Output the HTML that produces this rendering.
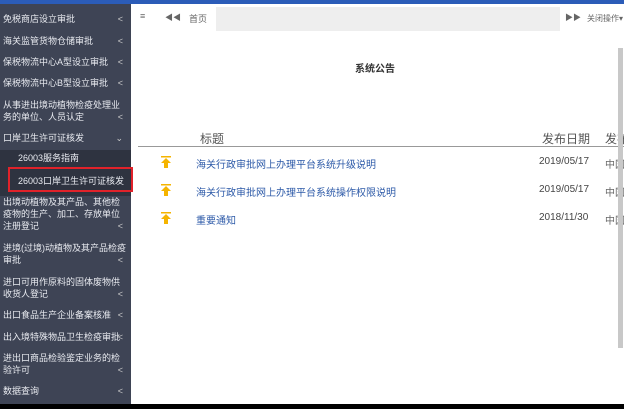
<!DOCTYPE html><html><head><meta charset="utf-8"><style>
*{margin:0;padding:0;box-sizing:border-box}
body{width:624px;height:409px;overflow:hidden;background:#fff;font-family:"Liberation Sans","Noto Sans CJK SC",sans-serif;position:relative;white-space:nowrap}
.top{position:absolute;left:0;top:0;width:624px;height:4px;background:#2b5cb8}
.side{position:absolute;left:0;top:4px;width:131px;height:400px;background:#3e4455;color:#e8eaf0;font-size:9px}
.it{position:absolute;left:3px;width:125px;line-height:12px}
.ar{position:absolute;right:5px;font-size:9px;color:#ccc}
.sub{position:absolute;left:0;top:146px;width:131px;height:46px;background:#2e3340}
.red{position:absolute;left:8px;top:167px;width:125px;height:25px;border:2.5px solid #e0222a}
.bottom{position:absolute;left:0;top:404px;width:624px;height:5px;background:#000}
.main{position:absolute;left:133px;top:4px;width:491px;height:400px;background:#fff;overflow:hidden}
.tabs{position:absolute;left:0;top:0;width:491px;height:26px;font-size:9px;color:#666}
.gray{position:absolute;left:83px;top:3px;width:344px;height:24px;background:#eeeeee}
.sc{position:absolute;left:618px;top:48px;width:5px;height:300px;background:#c8c8c8}
.row{position:absolute;font-size:10px}
.up{position:absolute;left:160px;width:12px;height:12px}
</style></head><body>
<div class="top"></div>
<div class="side">
<div class="sub"></div>
<div class="it" style="top:9px">免税商店设立审批<span class="ar">&lt;</span></div>
<div class="it" style="top:31px">海关监管货物仓储审批<span class="ar">&lt;</span></div>
<div class="it" style="top:52px">保税物流中心A型设立审批<span class="ar">&lt;</span></div>
<div class="it" style="top:73px">保税物流中心B型设立审批<span class="ar">&lt;</span></div>
<div class="it" style="top:95px">从事进出境动植物检疫处理业<br>务的单位、人员认定<span class="ar" style="top:12px">&lt;</span></div>
<div class="it" style="top:128px">口岸卫生许可证核发<span class="ar">⌄</span></div>
<div class="it" style="top:148px;left:18px">26003服务指南</div>
<div class="it" style="top:171px;left:18px">26003口岸卫生许可证核发</div>
<div class="it" style="top:192px">出境动植物及其产品、其他检<br>疫物的生产、加工、存放单位<br>注册登记<span class="ar" style="top:24px">&lt;</span></div>
<div class="it" style="top:238px">进境(过境)动植物及其产品检疫<br>审批<span class="ar" style="top:12px">&lt;</span></div>
<div class="it" style="top:272px">进口可用作原料的固体废物供<br>收货人登记<span class="ar" style="top:12px">&lt;</span></div>
<div class="it" style="top:305px">出口食品生产企业备案核准<span class="ar">&lt;</span></div>
<div class="it" style="top:327px">出入境特殊物品卫生检疫审批<span class="ar">&lt;</span></div>
<div class="it" style="top:348px">进出口商品检验鉴定业务的检<br>验许可<span class="ar" style="top:12px">&lt;</span></div>
<div class="it" style="top:381px">数据查询<span class="ar">&lt;</span></div>
</div>
<div class="red"></div>
<div class="main">
<div class="tabs"><div class="gray"></div>
<span style="position:absolute;left:7px;top:7px">≡</span>
<span style="position:absolute;left:32px;top:8px;font-size:8px">◀◀</span>
<span style="position:absolute;left:56px;top:8px">首页</span>
<span style="position:absolute;left:432px;top:8px;font-size:8px">▶▶</span>
<span style="position:absolute;left:454px;top:9px;font-size:8px">关闭操作▾</span>
</div>
<div style="position:absolute;left:222px;top:56px;font-size:10px;font-weight:bold;color:#333">系统公告</div>
<div style="position:absolute;left:67px;top:126px;font-size:12px;color:#555">标题</div>
<div style="position:absolute;left:409px;top:126px;font-size:12px;color:#555">发布日期</div>
<div style="position:absolute;left:472px;top:126px;font-size:12px;color:#555">发布</div>
<div style="position:absolute;left:5px;top:142px;width:486px;height:1px;background:#999"></div>
</div>
<svg class="up" style="top:156px" viewBox="0 0 12 12"><rect x="1" y="0" width="10" height="1.5" fill="#f5b400"/><path d="M6 2 L11 7 H8 V12 H4 V7 H1Z" fill="#f5b400"/></svg>
<svg class="up" style="top:184px" viewBox="0 0 12 12"><rect x="1" y="0" width="10" height="1.5" fill="#f5b400"/><path d="M6 2 L11 7 H8 V12 H4 V7 H1Z" fill="#f5b400"/></svg>
<svg class="up" style="top:212px" viewBox="0 0 12 12"><rect x="1" y="0" width="10" height="1.5" fill="#f5b400"/><path d="M6 2 L11 7 H8 V12 H4 V7 H1Z" fill="#f5b400"/></svg>
<div class="row" style="left:196px;top:156px;color:#2d5aa8">海关行政审批网上办理平台系统升级说明</div>
<div class="row" style="left:196px;top:184px;color:#2d5aa8">海关行政审批网上办理平台系统操作权限说明</div>
<div class="row" style="left:196px;top:212px;color:#2d5aa8">重要通知</div>
<div class="row" style="left:539px;top:156px;color:#444">2019/05/17</div>
<div class="row" style="left:539px;top:184px;color:#444">2019/05/17</div>
<div class="row" style="left:539px;top:212px;color:#444">2018/11/30</div>
<div class="row" style="left:605px;top:156px;color:#666">中国</div>
<div class="row" style="left:605px;top:184px;color:#666">中国</div>
<div class="row" style="left:605px;top:212px;color:#666">中国</div>
<div class="sc"></div>
<div class="bottom"></div>
</body></html>
